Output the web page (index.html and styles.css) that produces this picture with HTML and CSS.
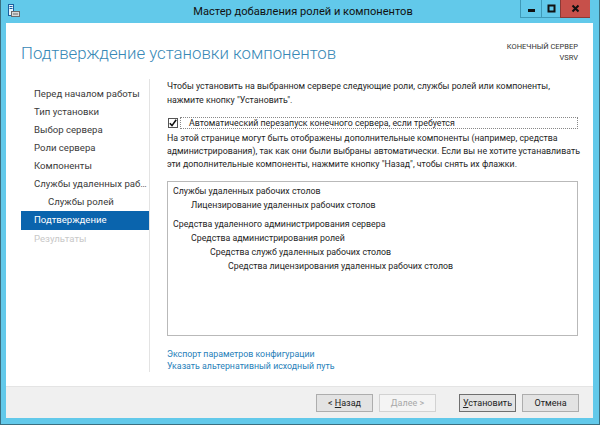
FILE: index.html
```html
<!DOCTYPE html>
<html lang="ru">
<head>
  <meta charset="UTF-8" />
  <title>Мастер добавления ролей и компонентов</title>
  <link rel="stylesheet" href="styles.css">
</head>
<body>
  <div class="window">
    <div class="titlebar">
      <svg class="app-icon" width="12" height="13" viewBox="0 0 12 13">
        <rect x="0.5" y="0.5" width="5" height="11" fill="#e8f4fb" stroke="#1a5fa0"/>
        <rect x="1.5" y="2" width="3" height="1" fill="#1a5fa0"/>
        <rect x="1.5" y="4" width="3" height="1" fill="#1a5fa0"/>
        <rect x="3.5" y="7.5" width="8" height="5" fill="#d8d8d8" stroke="#6a6a6a"/>
        <rect x="5" y="9.5" width="5" height="1" fill="#6a6a6a"/>
      </svg>
      <div class="title">Мастер добавления ролей и компонентов</div>
      <div class="controls">
        <div class="ctl min">
          <svg width="9" height="9" viewBox="0 0 9 9"><rect x="1" y="5" width="7" height="3" fill="#111"/></svg>
        </div>
        <div class="ctl max">
          <svg width="9" height="9" viewBox="0 0 9 9"><rect x="1.5" y="1.5" width="6" height="6" fill="none" stroke="#111" stroke-width="2"/></svg>
        </div>
        <div class="ctl close">
          <svg width="9" height="9" viewBox="0 0 9 9"><path d="M1.5 1.5 L7.5 7.5 M7.5 1.5 L1.5 7.5" stroke="#111" stroke-width="2"/></svg>
        </div>
      </div>
    </div>

    <div class="client">
      <div class="header">
        <h1>Подтверждение установки компонентов</h1>
        <div class="target">
          <div>КОНЕЧНЫЙ СЕРВЕР</div>
          <div>VSRV</div>
        </div>
      </div>

      <div class="main">
        <ul class="nav">
          <li>Перед началом работы</li>
          <li>Тип установки</li>
          <li>Выбор сервера</li>
          <li>Роли сервера</li>
          <li>Компоненты</li>
          <li>Службы удаленных рабочих столов</li>
          <li class="sub">Службы ролей</li>
          <li class="active">Подтверждение</li>
          <li class="disabled">Результаты</li>
        </ul>

        <div class="content">
          <p>Чтобы установить на выбранном сервере следующие роли, службы ролей или компоненты, нажмите кнопку "Установить".</p>

          <label class="restart">
            <span class="check">
              <svg width="8" height="8" viewBox="0 0 8 8"><path d="M0.8 4.2 L3 6.6 L7.2 0.8" fill="none" stroke="#111" stroke-width="1.6"/></svg>
            </span>
            <span class="restart-text">Автоматический перезапуск конечного сервера, если требуется</span>
          </label>

          <p class="note">На этой странице могут быть отображены дополнительные компоненты (например, средства администрирования), так как они были выбраны автоматически. Если вы не хотите устанавливать эти дополнительные компоненты, нажмите кнопку "Назад", чтобы снять их флажки.</p>

          <div class="features">
            <div class="group">
              <div class="lvl0">Службы удаленных рабочих столов</div>
              <div class="lvl1">Лицензирование удаленных рабочих столов</div>
            </div>
            <div class="group">
              <div class="lvl0">Средства удаленного администрирования сервера</div>
              <div class="lvl1">Средства администрирования ролей</div>
              <div class="lvl2">Средства служб удаленных рабочих столов</div>
              <div class="lvl3">Средства лицензирования удаленных рабочих столов</div>
            </div>
          </div>

          <div class="links">
            <a href="#">Экспорт параметров конфигурации</a>
            <a href="#">Указать альтернативный исходный путь</a>
          </div>
        </div>
      </div>

      <div class="footer">
        <button>&lt; <u>Н</u>азад</button>
        <button disabled><u>Д</u>алее &gt;</button>
        <button class="default gap"><u>У</u>становить</button>
        <button>Отмена</button>
      </div>
    </div>
  </div>
</body>
</html>
```

FILE: styles.css
```css
body {
  margin: 0;
  font-family: Roboto, "Noto Sans", sans-serif;
  color: #1e1e1e;
}
.window {
  width: 600px;
  height: 425px;
  box-sizing: border-box;
  background: #62c9ea;
  border: 1px solid #3b6f80;
  border-top: none;
  padding: 0 6px 6px 5px;
  display: flex;
  flex-direction: column;
}
.titlebar {
  height: 23px;
  display: flex;
  align-items: flex-start;
}
.app-icon {
  margin: 4px 0 0 2px;
}
.title {
  flex: 1;
  text-align: center;
  font-size: 11.1px;
  line-height: 14px;
  padding: 5px 0 0 66px;
  color: #111;
}
.controls {
  display: flex;
  margin-right: 3px;
}
.ctl {
  width: 20px;
  height: 17px;
  border: 1px solid #3f9ab8;
  border-top: none;
  border-right: none;
  display: flex;
  align-items: center;
  justify-content: center;
}
.ctl.max {
  width: 18px;
}
.ctl.close {
  width: 29px;
  background: #c7504a;
  border-color: #8a3a36;
}
.client {
  height: 395px;
  background: #fff;
  display: flex;
  flex-direction: column;
}
.header {
  height: 56px;
  box-sizing: border-box;
  display: flex;
  justify-content: space-between;
  padding: 19px 15px 0 15px;
}
.header h1 {
  margin: 0;
  font-weight: 300;
  font-size: 16.8px;
  line-height: 22px;
  color: #3788b6;
}
.target {
  text-align: right;
  font-size: 7.5px;
  line-height: 11px;
  margin-top: -1px;
  color: #333;
}
.main {
  height: 307px;
  display: flex;
}
.nav {
  list-style: none;
  margin: 0 0 14px 15px;
  padding: 6px 0 0 0;
  width: 128px;
  border-right: 1px solid #e3e3e3;
}
.nav li {
  font-size: 9.6px;
  height: 18px;
  line-height: 18px;
  padding: 0 1px 0 13px;
  color: #3a3a3a;
  white-space: nowrap;
  overflow: hidden;
  text-overflow: ellipsis;
}
.nav li.sub {
  padding-left: 27px;
}
.nav li.active {
  height: 19px;
  background: #0a64ad;
  color: #fff;
}
.nav li.disabled {
  color: #c8c8c8;
}
.content {
  flex: 1;
  padding: 0 15px 0 17px;
  font-size: 8.8px;
  line-height: 14px;
}
.content p {
  margin: 0;
}
.restart {
  display: flex;
  align-items: center;
  height: 12px;
  margin: 10px 0 0 1px;
}
.check {
  width: 8px;
  height: 8px;
  border: 1px solid #555;
  display: flex;
  align-items: center;
  justify-content: center;
}
.restart-text {
  flex: 1;
  margin-left: 2px;
  padding-left: 8px;
  border: 1px dotted #888;
  line-height: 10px;
}
.content p.note {
  margin: 3px -10px 0 0;
  line-height: 13px;
}
.features {
  margin-top: 10px;
  height: 155px;
  box-sizing: border-box;
  border: 1px solid #b9b9b9;
  padding: 2px 5px;
}
.group {
  margin-bottom: 5px;
}
.lvl1 { padding-left: 18px; }
.lvl2 { padding-left: 37px; }
.lvl3 { padding-left: 55px; }
.links {
  margin-top: 12px;
  display: flex;
  flex-direction: column;
  line-height: 12px;
}
.links a {
  color: #2680b9;
  text-decoration: none;
}
.footer {
  height: 31px;
  background: #f0f0f0;
  border-top: 1px solid #e4e4e4;
  display: flex;
  align-items: center;
  justify-content: flex-end;
  padding-right: 14px;
  gap: 6px;
}
.footer button {
  width: 57px;
  height: 18px;
  font-family: inherit;
  font-size: 9px;
  color: #222;
  background: #e3e3e3;
  border: 1px solid #adadad;
  padding: 0;
}
.footer button:disabled {
  color: #a8a8a8;
  background: #f4f4f4;
  border-color: #d2d2d2;
}
.footer .default {
  border-color: #6f6f6f;
}
.footer .gap {
  margin-left: 17px;
}
```
